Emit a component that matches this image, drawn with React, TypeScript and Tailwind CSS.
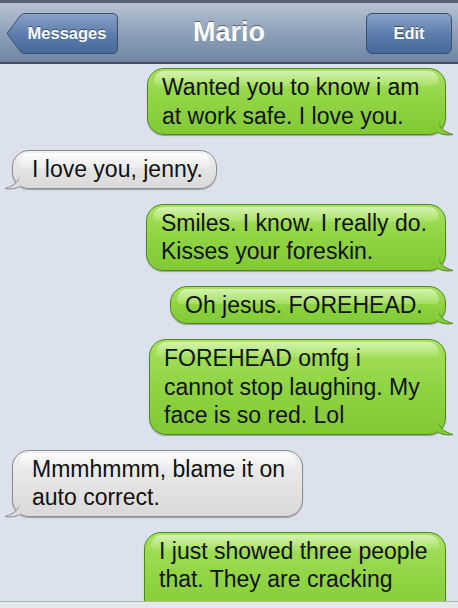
import React from 'react';

type Msg = { from: 'me' | 'them'; w: number; lines: string[] };

const messages: Msg[] = [
  { from: 'me', w: 299, lines: ['Wanted you to know i am', 'at work safe. I love you.'] },
  { from: 'them', w: 205, lines: ['I love you, jenny.'] },
  { from: 'me', w: 300, lines: ['Smiles. I know. I really do.', 'Kisses your foreskin.'] },
  { from: 'me', w: 276, lines: ['Oh jesus. FOREHEAD.'] },
  { from: 'me', w: 297, lines: ['FOREHEAD omfg i', 'cannot stop laughing. My', 'face is so red. Lol'] },
  { from: 'them', w: 291, lines: ['Mmmhmmm, blame it on', 'auto correct.'] },
  { from: 'me', w: 302, lines: ['I just showed three people', 'that. They are cracking', 'up.'] },
];

function Tail({ side }: { side: 'me' | 'them' }) {
  const fill = side === 'me' ? '#85cc3a' : '#dcdcdc';
  const stroke = side === 'me' ? '#4d8a1c' : '#8d8d8d';
  return (
    <svg
      width="16"
      height="14"
      viewBox="0 0 16 14"
      className={side === 'me' ? 'absolute -right-[9px] bottom-[-2px]' : 'absolute -left-[9px] bottom-[-2px] -scale-x-100'}
    >
      <path d="M0 0 C2 6 6 10 15 12.5 C10 13.5 5 13 0 10.5 Z" fill={fill} stroke={stroke} strokeWidth="1" />
      <path d="M0 0.5 L1 10.5" stroke={fill} strokeWidth="2" />
    </svg>
  );
}

function Bubble({ m }: { m: Msg }) {
  const me = m.from === 'me';
  return (
    <div
      style={{ width: m.w }}
      className={
        me
          ? 'relative ml-auto mr-[12px] rounded-[17px] border border-[#4d8a1c] bg-linear-to-b from-[#a8e25e] via-[#8fd442] to-[#82c936] pl-[14px] pr-[6px] py-[4px] shadow-[0_1px_1px_rgba(0,0,0,0.3)]'
          : 'relative ml-[12px] rounded-[17px] border border-[#8d8d8d] bg-linear-to-b from-[#f2f2f2] via-[#e4e4e4] to-[#d9d9d9] pl-[19px] pr-[6px] py-[4px] shadow-[0_1px_1px_rgba(0,0,0,0.3)]'
      }
    >
      <div
        className={
          me
            ? 'absolute left-[6px] right-[6px] top-[2px] h-[15px] rounded-t-[14px] rounded-b-[6px] bg-linear-to-b from-[#e0f7c2] to-[#a9e163] opacity-80'
            : 'absolute left-[6px] right-[6px] top-[2px] h-[15px] rounded-t-[14px] rounded-b-[6px] bg-linear-to-b from-white to-[#ececec] opacity-90'
        }
      />
      <Tail side={m.from} />
      <p className="relative text-[23px] leading-[28.5px] text-[#111] whitespace-nowrap">
        {m.lines.map((l, i) => (
          <React.Fragment key={i}>
            {l}
            {i < m.lines.length - 1 && <br />}
          </React.Fragment>
        ))}
      </p>
    </div>
  );
}

export default function App() {
  return (
    <div className="w-[458px] h-[608px] flex flex-col overflow-hidden font-['Liberation_Sans',Arial,sans-serif] bg-[#dbe2ed]">
      <header className="h-[64px] shrink-0 flex items-center px-[6px] border-t-[3px] border-t-[#556275] border-b-2 border-b-[#3f4c60] bg-linear-to-b from-[#b8c3d2] via-[#8fa1b9] to-[#6f85a3]">
        <div className="flex-1 flex">
          <div className="relative w-[112px] h-[41px] flex items-center justify-center pl-[10px] mt-[1px]">
            <svg width="112" height="41" viewBox="0 0 112 41" className="absolute inset-0">
              <defs>
                <linearGradient id="bk" x1="0" y1="0" x2="0" y2="1">
                  <stop offset="0" stopColor="#8aa3c7" />
                  <stop offset="0.5" stopColor="#5d7eac" />
                  <stop offset="1" stopColor="#46699b" />
                </linearGradient>
              </defs>
              <path
                d="M1 20.5 L14 3 Q16 0.5 19 0.5 L106 0.5 Q111.5 0.5 111.5 6 L111.5 35 Q111.5 40.5 106 40.5 L19 40.5 Q16 40.5 14 38 Z"
                fill="url(#bk)"
                stroke="#3a4e6d"
              />
            </svg>
            <span className="relative text-white font-bold text-[16.5px] [text-shadow:0_-1px_0_rgba(0,0,0,0.45)]">Messages</span>
          </div>
        </div>
        <h1 className="text-white font-bold text-[27px] leading-none [text-shadow:0_-1px_0_rgba(0,0,0,0.45)]">Mario</h1>
        <div className="flex-1 flex justify-end">
          <div className="w-[86px] h-[41px] mt-[1px] rounded-[6px] border border-[#3a4e6d] bg-linear-to-b from-[#8aa3c7] via-[#5d7eac] to-[#46699b] flex items-center justify-center">
            <span className="text-white font-bold text-[16.5px] [text-shadow:0_-1px_0_rgba(0,0,0,0.45)]">Edit</span>
          </div>
        </div>
      </header>
      <main className="flex-1 overflow-hidden flex flex-col gap-[15px] pt-[4px]">
        {messages.map((m, i) => (
          <Bubble key={i} m={m} />
        ))}
      </main>
      <div className="h-[7px] shrink-0 border-t border-[#aeb3ba] bg-[#e6e8ec]" />
    </div>
  );
}
